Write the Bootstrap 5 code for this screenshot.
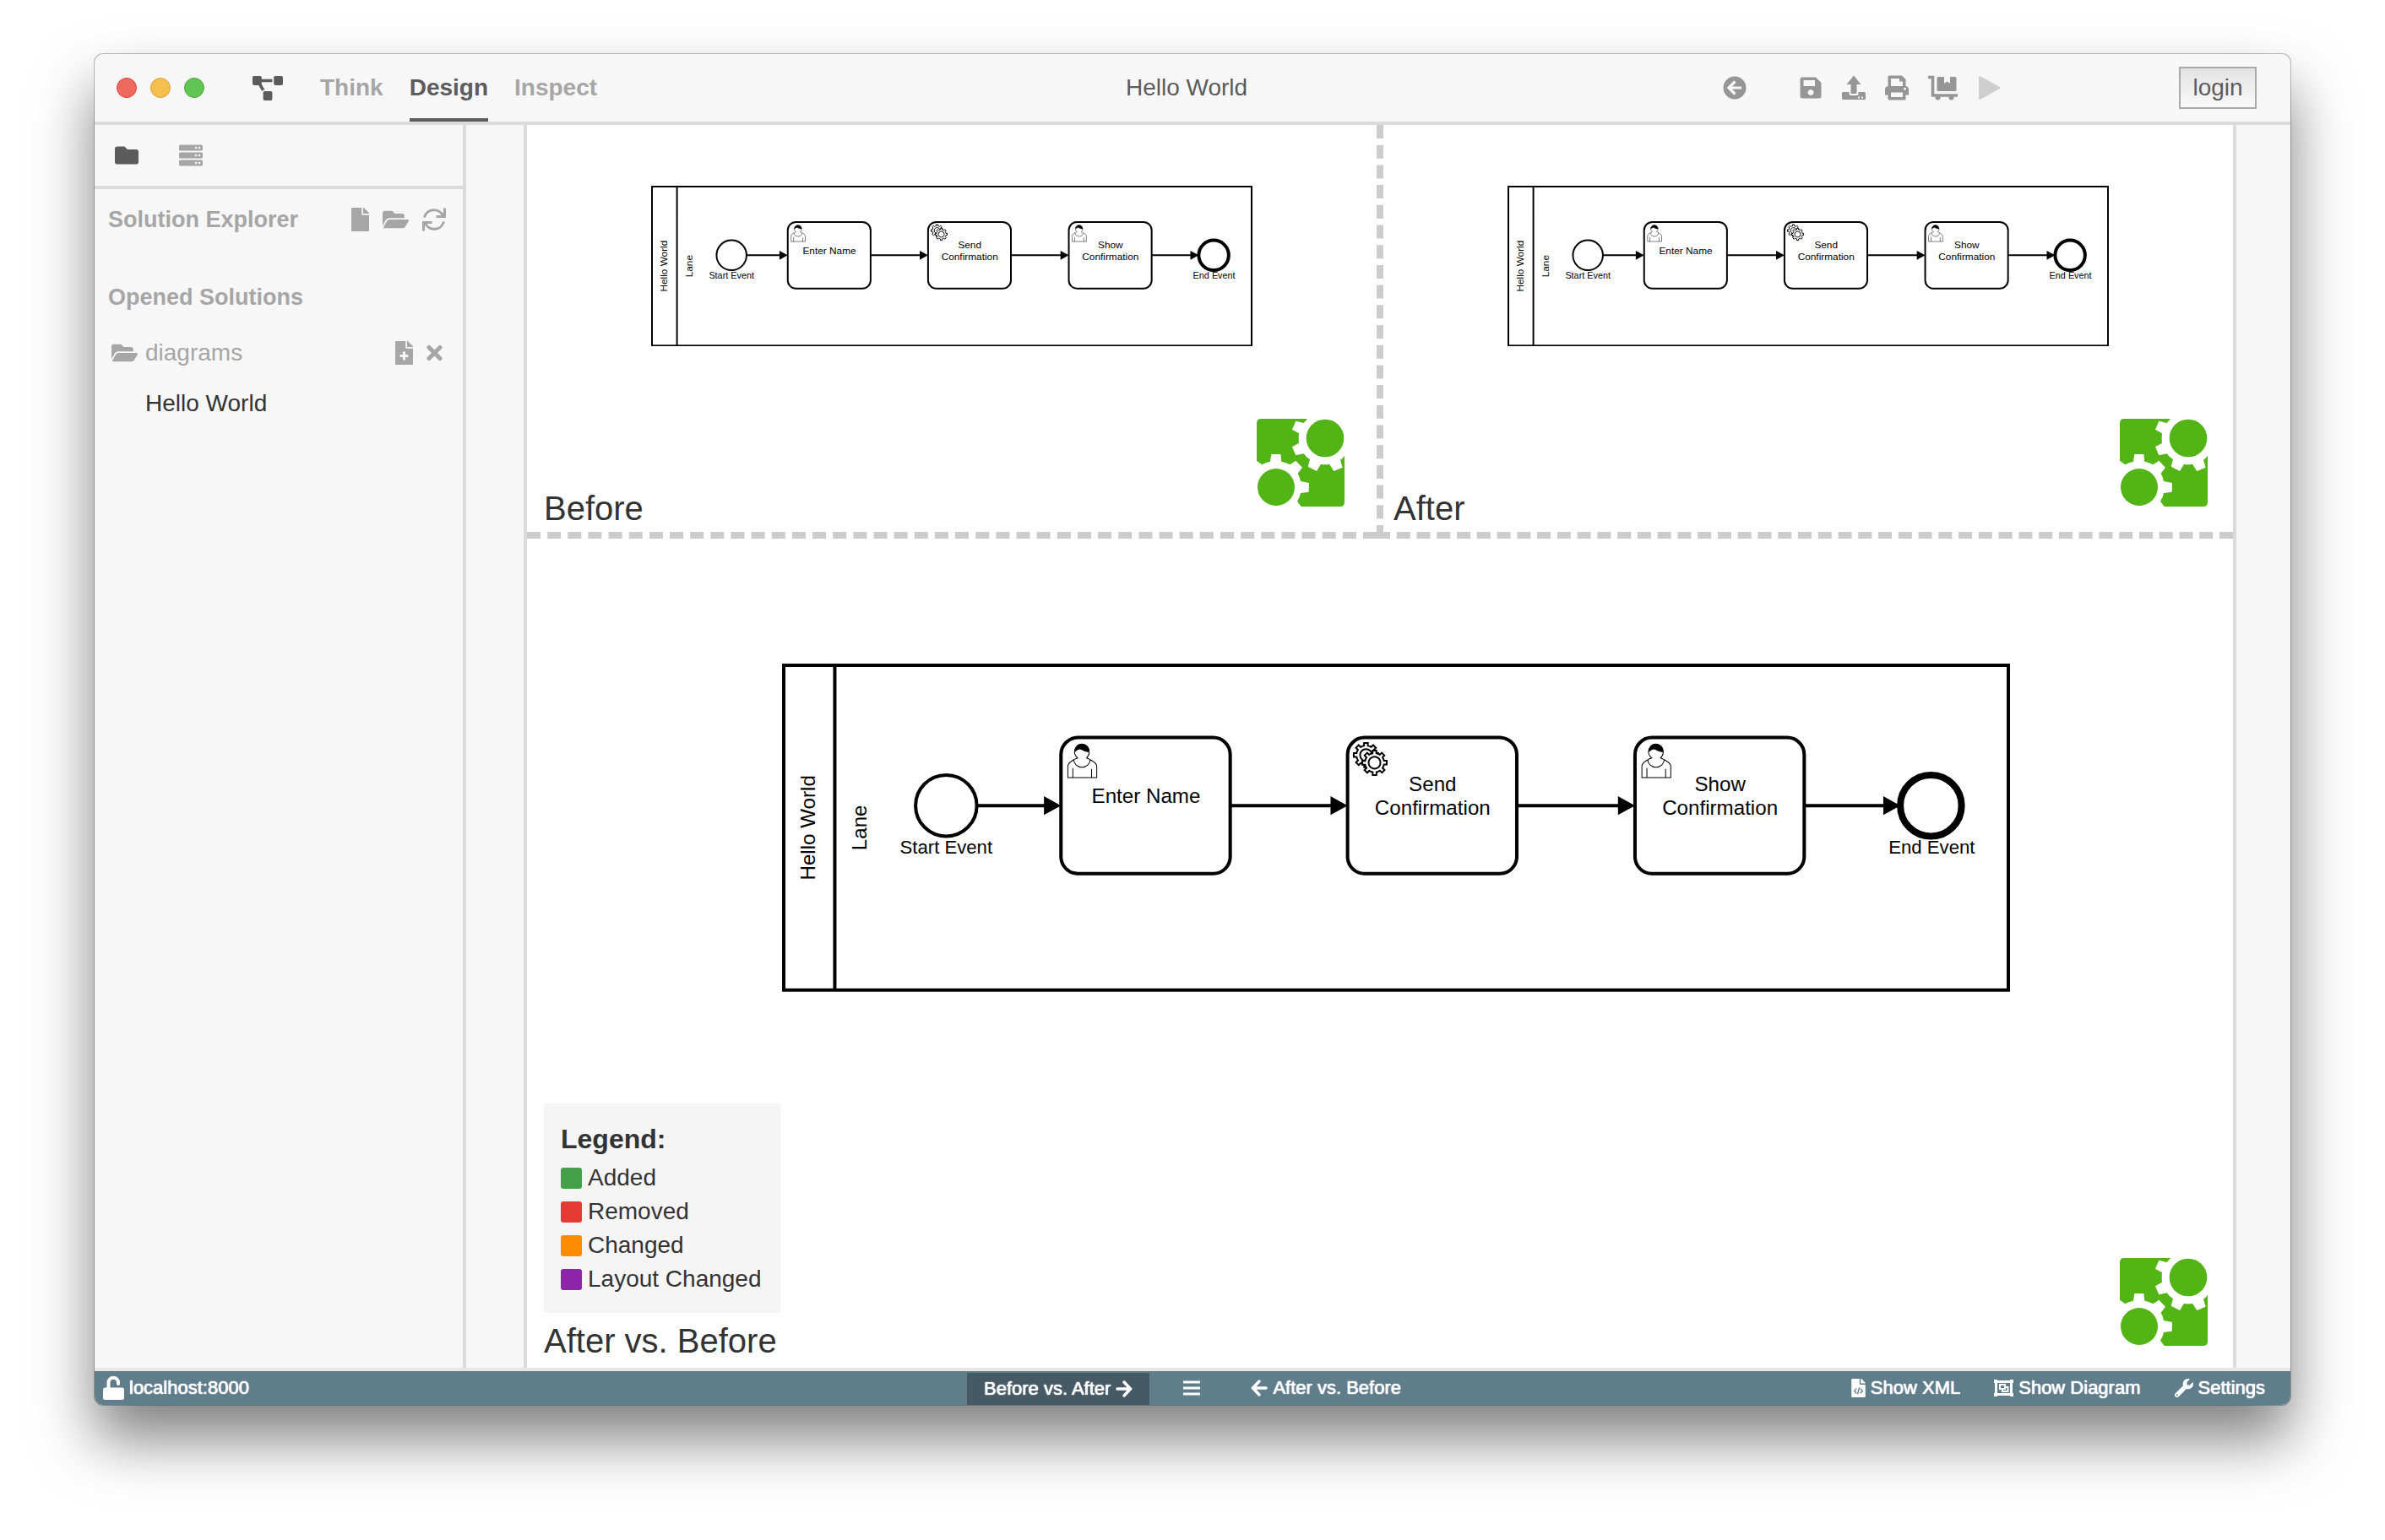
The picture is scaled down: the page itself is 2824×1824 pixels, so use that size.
<!DOCTYPE html>
<html lang="en">
<head>
<meta charset="utf-8">
<meta name="viewport" content="width=device-width, initial-scale=1">
<title>Hello World</title>
<link href="https://cdn.jsdelivr.net/npm/bootstrap@5.3.0/dist/css/bootstrap.min.css" rel="stylesheet">
<style>
  body { font-family: "Liberation Sans", Arial, sans-serif; font-size: 28px; line-height: 40px; color: #333; background: #fff; min-height: 100vh; padding: 64px 112px 160px; }
  svg { display: block; flex: none; }
  button { color: inherit; background: none; border: 0; padding: 0; text-shadow: inherit; }
  a { color: inherit; text-decoration: none; }
  .app-window { background: #f7f7f7; border-radius: 10px; overflow: hidden; box-shadow: 0 0 0 1px rgba(0,0,0,.25), 0 40px 70px rgba(0,0,0,.5); }

  .titlebar { height: 84px; border-bottom: 4px solid #dbdbdb; padding: 0 40px 0 26px; color: #5c5c5c; }
  .light { width: 24px; height: 24px; border-radius: 50%; border: 1px solid #e0443e; background: #ee6a5f; }
  .light.min { background: #f5bf4f; border-color: #d6a243; }
  .light.max { background: #61c554; border-color: #50a73f; }
  .mode-tabs { gap: 31px; margin-left: 44px; }
  .mode-tabs a { display: flex; align-items: center; color: #a6a6a6; font-weight: 700; border: solid transparent; border-width: 4px 0; }
  .mode-tabs a.active { color: #5c5c5c; border-bottom-color: #5c5c5c; }
  .logo-icon { margin-left: 57px; }
  .tools { gap: 23px; margin-right: 210px; color: #969696; }
  .tools .back { margin-right: 39px; }
  .tools .run { color: #cfcfcf; }
  .login-btn { width: 92px; height: 50px; border: 2px solid #aaa; background: linear-gradient(#e3e3e3, #fafafa); }

  .explorer { width: 440px; border-right: 4px solid #dbdbdb; color: #a6a6a6; }
  .explorer-tabs { height: 76px; border-bottom: 4px solid #dbdbdb; padding: 0 24px; gap: 48px; }
  .explorer-tabs .active { color: #5c5c5c; }
  .tree-row { height: 60px; padding: 0 20px 0 16px; gap: 16px; }
  .tree-row h2 { font-size: 27px; font-weight: 700; margin: 0; line-height: 40px; }
  .tree-head { height: 72px; margin-bottom: 26px; }
  .solution { margin-top: 6px; padding: 0 24px 0 20px; }
  .solution .folder-name { gap: 9px; }
  .diagram-item { padding-left: 60px; color: #333; }
  .gutter-left { width: 72px; border-right: 4px solid #dbdbdb; }
  .gutter-right { width: 68px; border-left: 4px solid #dbdbdb; }

  .canvas { background: #fff; }
  .compare-row { height: 490px; }
  .pane { border-bottom: 8px dashed #ccc; }
  .pane + .pane { border-left: 8px dashed #ccc; }
  .diagram { display: block; height: auto; max-width: 100%; margin: 0 auto; }
  .diagram text { font-family: "Liberation Sans", Arial, sans-serif; font-size: 12px; text-anchor: middle; fill: #000; }
  .diagram .event-label { font-size: 11px; }
  .diagram-sm { width: 712px; margin-top: 72px; }
  .diagram-lg { width: 1454px; }
  .diff-stage { padding: 148px 0 0 37px; }
  .pane-foot { padding: 0 30px 0 20px; }
  .pane-foot .engine-logo { margin-bottom: 30px; }
  .pane-before .pane-foot { padding-right: 38px; }
  .pane-after .pane-foot { padding-left: 12px; }
  .diff .engine-logo { margin-bottom: 26px; }
  .diff .pane-title { margin-bottom: 4px; }
  .pane-title { font-size: 40px; line-height: 56px; font-weight: 400; margin: 0; }
  .legend { min-width: 280px; background: #f5f5f5; padding: 20px; margin-bottom: 5px; }
  .legend h3 { font-size: 32px; line-height: 44px; font-weight: 700; margin: 0 0 4px; }
  .legend li { gap: 7px; }
  .swatch { width: 25px; height: 25px; border-radius: 3px; }
  .added { background: #43a047; } .removed { background: #e53935; } .changed { background: #fb8c00; } .moved { background: #8e24aa; }

  .statusbar { height: 44px; border-top: 4px solid #e6e8e8; background: #607d8b; color: #fff; font-size: 22px; line-height: 36px; padding: 0 10px; text-shadow: 0 0 1px #fff, 0 0 1px #fff; }
  .statusbar button, .statusbar a { display: flex; align-items: center; gap: 6px; padding: 0 20px; align-self: stretch; white-space: nowrap; }
  .statusbar .host { padding: 0; }
  .statusbar .current { background: #455a64; margin-top: 2px; }
  .statusbar .menu { padding: 0 40px; }
</style>
<script src="https://cdn.jsdelivr.net/npm/bootstrap@5.3.0/dist/js/bootstrap.bundle.min.js"></script>
</head>
<body class="d-flex flex-column">

<svg width="0" height="0" class="position-absolute" aria-hidden="true">
  <defs>
    <g id="user-mark" stroke="#000" stroke-width=".5" fill="#fff">
      <path d="m15,12 c0.909,-0.845 1.594,-2.049 1.594,-3.385 0,-2.554 -1.805,-4.622 -4.357,-4.622 -2.552,0 -4.288,2.068 -4.288,4.622 0,1.348 0.974,2.562 1.896,3.405 -0.529,0.187 -5.669,2.097 -5.794,4.756 v6.718 h17 v-6.718 c0,-2.298 -5.528,-4.595 -6.051,-4.776z m-8,6 l0,5.5 m11,0 l0,-5"/>
      <path d="m15,12 m2.162,1.009 c0,2.447 -2.158,4.431 -4.821,4.431 -2.665,0 -4.822,-1.981 -4.822,-4.431"/>
      <path fill="#000" d="m15,12 m-6.9,-3.8 c0,0 2.251,-2.358 4.274,-1.177 2.024,1.181 4.221,1.537 4.124,0.965 -0.098,-0.57 -0.117,-3.791 -4.191,-4.136 -3.572,0.001 -4.208,3.67 -4.208,4.348 z"/>
    </g>
    <g id="gear-mark">
      <circle cx="-1.140" cy="-7.230" r="4" fill="#fff"/>
      <path stroke="#000" fill="#fff" d="m0,0 v-1.713 c0.352,-0.07 0.704,-0.178 1.048,-0.321 0.344,-0.145 0.666,-0.321 0.966,-0.521 l1.194,1.18 1.567,-1.577 -1.195,-1.18 c0.403,-0.614 0.683,-1.299 0.825,-2.018 l1.622,-0.01 v-2.22 l-1.637,0.01 c-0.073,-0.352 -0.178,-0.7 -0.324,-1.044 -0.145,-0.344 -0.321,-0.664 -0.523,-0.962 l1.131,-1.136 -1.583,-1.563 -1.13,1.136 c-0.614,-0.401 -1.303,-0.681 -2.023,-0.822 l0.009,-1.619 h-2.241 l0.004,1.631 c-0.354,0.074 -0.705,0.18 -1.05,0.324 -0.344,0.144 -0.665,0.321 -0.964,0.52 l-1.17,-1.158 -1.567,1.579 1.168,1.157 c-0.403,0.613 -0.683,1.298 -0.825,2.017 l-1.659,0.003 v2.222 l1.672,-0.006 c0.073,0.351 0.18,0.702 0.324,1.045 0.145,0.344 0.321,0.664 0.523,0.961 l-1.199,1.197 1.584,1.56 1.196,-1.193 c0.614,0.403 1.303,0.682 2.023,0.823 l0.001,1.699 h2.227 z m0.221,-3.996 c-1.789,0.75 -3.858,-0.093 -4.61,-1.874 -0.752,-1.783 0.091,-3.846 1.88,-4.596 1.788,-0.749 3.857,0.093 4.609,1.874 0.752,1.782 -0.091,3.846 -1.88,4.596 z"/>
    </g>
    <g id="flow-shapes">
      <g fill="#fff" stroke="#000" stroke-width="2">
        <rect x="0" y="0" width="720" height="191"/>
        <path d="M30 0V191"/>
        <circle cx="95.5" cy="82.5" r="18"/>
        <rect x="163" y="42.5" width="99.5" height="80" rx="10"/>
        <rect x="331.5" y="42.5" width="99.5" height="80" rx="10"/>
        <rect x="500.5" y="42.5" width="99.5" height="80" rx="10"/>
        <path d="M113.500 82.500H155M263 82.500H324M431.500 82.500H492M600.500 82.500H648"/>
        <circle cx="674.500" cy="82.500" r="18" stroke-width="4"/>
      </g>
      <path d="M153 77v11l10-5.500zM321.500 77v11l10-5.500zM490.500 77v11l10-5.500zM646.500 77v11l10-5.500z"/>
      <use href="#user-mark" x="163" y="42.5"/>
      <use href="#user-mark" x="500.5" y="42.5"/>
      <use href="#gear-mark" x="343.5" y="60"/>
      <use href="#gear-mark" x="348.500" y="64.500"/>
    </g>
    <symbol id="engine-logo" viewBox="0 0 312 312">
      <path d="M0 16Q0 0 16 0H180L167 15 139 8 126 38 150 52Q148 69 150 86L126 100 139 130 167 124Q176 137 189 145L182 170 213 186 228 161Q243 164 258 161L274 186 305 173 297 146Q306 140 312 131V296Q312 312 296 312H158L144 293Q153 280 156 264L185 260 186 228 156 222Q153 206 146 194L162 173 139 149 118 163Q104 155 88 152L85 126H52L48 152Q34 154 19 163L0 149z"/>
      <circle cx="243" cy="69" r="67"/><circle cx="69" cy="243" r="66"/>
    </symbol>
    <symbol id="i-folder-open" viewBox="0 0 576 512"><path d="M572.694 292.093L500.27 416.248A63.997 63.997 0 0 1 444.989 448H45.025c-18.523 0-30.064-20.093-20.731-36.093l72.424-124.155A64 64 0 0 1 152 256h399.964c18.523 0 30.064 20.093 20.730 36.093zM152 224h328v-48c0-26.510-21.490-48-48-48H272l-64-64H48C21.490 64 0 85.490 0 112v278.046l69.077-118.418C86.214 242.250 117.989 224 152 224z"/></symbol>
    <path id="i-file" d="M224 136V0H24C10.700 0 0 10.700 0 24v464c0 13.300 10.700 24 24 24h336c13.300 0 24-10.700 24-24V160H248c-13.200 0-24-10.800-24-24zm160-14.100v6.100H256V0h6.100c6.400 0 12.500 2.500 17 7l97.900 98c4.500 4.500 7 10.600 7 16.900z"/>
  </defs>
</svg>

<main class="app-window d-flex flex-column flex-grow-1">
  <header class="titlebar d-flex align-items-stretch">
    <div class="d-flex align-items-center col">
      <div class="d-flex gap-3" aria-hidden="true"><span class="light"></span><span class="light min"></span><span class="light max"></span></div>
      <svg class="logo-icon" width="36" height="29" viewBox="0 0 640 512" fill="currentColor"><path d="M384 320H256c-17.670 0-32 14.330-32 32v128c0 17.670 14.330 32 32 32h128c17.670 0 32-14.330 32-32V352c0-17.670-14.330-32-32-32zM192 32c0-17.670-14.330-32-32-32H32C14.330 0 0 14.330 0 32v128c0 17.670 14.330 32 32 32h95.720l73.160 128.040C211.980 300.980 232.400 288 256 288h.280L192 175.510V128h224V64H192V32zM608 0H480c-17.670 0-32 14.330-32 32v128c0 17.670 14.330 32 32 32h128c17.670 0 32-14.330 32-32V32c0-17.670-14.330-32-32-32z"/></svg>
      <nav class="mode-tabs d-flex align-self-stretch">
        <a href="#think">Think</a><a href="#design" class="active" aria-current="page">Design</a><a href="#inspect">Inspect</a>
      </nav>
    </div>
    <div class="align-self-center">Hello World</div>
    <div class="d-flex align-items-center justify-content-end col">
      <div class="tools d-flex align-items-center">
        <button class="back" aria-label="Back"><svg width="28" height="28" viewBox="0 0 28 28"><circle cx="14" cy="14" r="13.500" fill="currentColor"/><path d="M14.500 6.500L7 14l7.500 7.500M7.500 14H22" fill="none" stroke="#f7f7f7" stroke-width="3.200"/></svg></button>
        <button aria-label="Save"><svg width="28" height="28" viewBox="0 0 28 28" fill="currentColor" fill-rule="evenodd"><path d="M4 1.500H20L26.500 8V24a2.500 2.500 0 0 1-2.500 2.500H4A2.500 2.500 0 0 1 1.500 24V4A2.500 2.500 0 0 1 4 1.500zM5.500 5v7H19V5zM14 16a3.500 3.500 0 1 0 .1 0z"/></svg></button>
        <button aria-label="Upload"><svg width="28" height="30" viewBox="0 0 28 30" fill="currentColor" fill-rule="evenodd"><path d="M14 .5L22.500 11H17.500V20.500a1.500 1.500 0 0 1-1.500 1.500H12a1.500 1.500 0 0 1-1.500-1.500V11H5.500z"/><path d="M1.500 20H8.500V21.500a2.500 2.500 0 0 0 2.500 2.500H17a2.500 2.500 0 0 0 2.500-2.500V20H26.500A1.500 1.500 0 0 1 28 21.500V27.500A1.500 1.500 0 0 1 26.500 29H1.500A1.500 1.500 0 0 1 0 27.500V21.500A1.500 1.500 0 0 1 1.500 20zM19 25.500v2h2v-2zM23 25.500v2h2v-2z"/></svg></button>
        <button aria-label="Print"><svg width="28" height="30" viewBox="0 0 28 30" fill="currentColor" fill-rule="evenodd"><path d="M5 .5H20L24.500 5V13Q28 13.500 28 17V23.500H24.500V28A1.500 1.500 0 0 1 23 29.500H5A1.500 1.500 0 0 1 3.500 28V23.500H0V17Q0 13.500 3.500 13V2A1.500 1.500 0 0 1 5 .5zM7 4V13H21V7.500H17V4zM7 20.500V26H21V20.500zM23.500 14.700a1.500 1.500 0 1 0 .1 0z"/></svg></button>
        <button aria-label="Deploy"><svg width="36" height="30" viewBox="0 0 36 30"><path d="M0 2.500H5.500V24H35" fill="none" stroke="currentColor" stroke-width="3.600"/><path d="M12 2H19V10L22.500 7.500 26 10V2H32A1.500 1.500 0 0 1 33.500 3.500V17.500A1.500 1.500 0 0 1 32 19H12A1.500 1.500 0 0 1 10.500 17.500V3.500A1.500 1.500 0 0 1 12 2z" fill="currentColor"/><circle cx="11.500" cy="26.500" r="3" fill="currentColor"/><circle cx="27.500" cy="26.500" r="3" fill="currentColor"/></svg></button>
        <button class="run" aria-label="Run"><svg width="28" height="28" viewBox="0 0 28 28"><path d="M1 2Q1-.500 3.500 .500L25 12.500Q27 14 25 15.500L3.500 27.500Q1 28.500 1 26z" fill="currentColor"/></svg></button>
      </div>
      <button class="login-btn">login</button>
    </div>
  </header>

  <div class="d-flex flex-grow-1">
    <aside class="explorer flex-shrink-0">
      <div class="explorer-tabs d-flex align-items-center">
        <button class="active" aria-label="Files"><svg width="28" height="28" viewBox="0 0 512 512" fill="currentColor"><path d="M464 128H272l-64-64H48C21.490 64 0 85.490 0 112v288c0 26.510 21.490 48 48 48h416c26.510 0 48-21.490 48-48V176c0-26.510-21.490-48-48-48z"/></svg></button>
        <button aria-label="Servers"><svg width="28" height="26" viewBox="0 0 28 26" fill="currentColor"><rect y="0.500" width="28" height="7" rx="1.500"/><rect y="9.500" width="28" height="7" rx="1.500"/><rect y="18.500" width="28" height="7" rx="1.500"/><g fill="#f7f7f7"><circle cx="20" cy="4" r="1.300"/><circle cx="24" cy="4" r="1.300"/><circle cx="20" cy="13" r="1.300"/><circle cx="24" cy="13" r="1.300"/><circle cx="20" cy="22" r="1.300"/><circle cx="24" cy="22" r="1.300"/></g></svg></button>
      </div>
      <div class="tree-row tree-head d-flex align-items-center">
        <h2 class="me-auto">Solution Explorer</h2>
        <button aria-label="New diagram"><svg width="21" height="28" viewBox="0 0 384 512" fill="currentColor"><use href="#i-file"/></svg></button>
        <button aria-label="Open solution"><svg width="31" height="28" fill="currentColor"><use href="#i-folder-open"/></svg></button>
        <button aria-label="Refresh"><svg width="28" height="28" viewBox="0 0 28 28" fill="none" stroke="currentColor" stroke-width="3"><path d="M2.500 11.500A11.700 11.700 0 0 1 24.500 9.500M16.500 10.500H26.500V.5"/><path d="M25.500 16.500A11.700 11.700 0 0 1 3.500 18.500M11.500 17.500H1.500V27.500"/></svg></button>
      </div>
      <div class="tree-row d-flex align-items-center"><h2>Opened Solutions</h2></div>
      <div class="tree-row solution d-flex align-items-center">
        <div class="folder-name d-flex align-items-center me-auto"><svg width="31" height="28" fill="currentColor"><use href="#i-folder-open"/></svg>diagrams</div>
        <button aria-label="Add diagram"><svg width="21" height="28" viewBox="0 0 384 512" fill="currentColor"><use href="#i-file"/><path d="M192 230V410M102 320H282" stroke="#f7f7f7" stroke-width="56"/></svg></button>
        <button aria-label="Close solution"><svg width="19" height="20" viewBox="0 0 19 20"><path d="M3 3.500L16 16.500M16 3.500L3 16.500" stroke="currentColor" stroke-width="5" stroke-linecap="round"/></svg></button>
      </div>
      <a href="#hello-world" class="tree-row diagram-item d-flex align-items-center">Hello World</a>
    </aside>
    <div class="gutter-left flex-shrink-0"></div>

    <section class="canvas flex-grow-1 d-flex flex-column">
      <div class="compare-row d-flex">
        <div class="pane pane-before col d-flex flex-column">
          <svg class="diagram diagram-sm" viewBox="-1 -1 722 193" role="img" aria-label="Before">
            <use href="#flow-shapes"/>
            <text transform="translate(18.500 95.500) rotate(-90)">Hello World</text><text transform="translate(48.500 95.500) rotate(-90)">Lane</text>
            <text class="event-label" x="95.500" y="110.500">Start Event</text><text x="213" y="81">Enter Name</text>
            <text x="381.500" y="74">Send</text><text x="381.500" y="88">Confirmation</text>
            <text x="550.500" y="74">Show</text><text x="550.500" y="88">Confirmation</text><text class="event-label" x="675" y="110.500">End Event</text>
          </svg>
          <div class="pane-foot d-flex justify-content-between align-items-end mt-auto">
            <h2 class="pane-title">Before</h2>
            <svg class="engine-logo" width="104" height="104" fill="#52b415"><use href="#engine-logo"/></svg>
          </div>
        </div>
        <div class="pane pane-after col d-flex flex-column">
          <svg class="diagram diagram-sm" viewBox="-1 -1 722 193" role="img" aria-label="After">
            <use href="#flow-shapes"/>
            <text transform="translate(18.500 95.500) rotate(-90)">Hello World</text><text transform="translate(48.500 95.500) rotate(-90)">Lane</text>
            <text class="event-label" x="95.500" y="110.500">Start Event</text><text x="213" y="81">Enter Name</text>
            <text x="381.500" y="74">Send</text><text x="381.500" y="88">Confirmation</text>
            <text x="550.500" y="74">Show</text><text x="550.500" y="88">Confirmation</text><text class="event-label" x="675" y="110.500">End Event</text>
          </svg>
          <div class="pane-foot d-flex justify-content-between align-items-end mt-auto">
            <h2 class="pane-title">After</h2>
            <svg class="engine-logo" width="104" height="104" fill="#52b415"><use href="#engine-logo"/></svg>
          </div>
        </div>
      </div>
      <div class="diff d-flex flex-column flex-grow-1">
        <div class="diff-stage">
          <svg class="diagram diagram-lg" viewBox="-1 -1 722 193" role="img" aria-label="After vs. Before">
            <use href="#flow-shapes"/>
            <text transform="translate(18.500 95.500) rotate(-90)">Hello World</text><text transform="translate(48.500 95.500) rotate(-90)">Lane</text>
            <text class="event-label" x="95.500" y="110.500">Start Event</text><text x="213" y="81">Enter Name</text>
            <text x="381.500" y="74">Send</text><text x="381.500" y="88">Confirmation</text>
            <text x="550.500" y="74">Show</text><text x="550.500" y="88">Confirmation</text><text class="event-label" x="675" y="110.500">End Event</text>
          </svg>
        </div>
        <div class="pane-foot d-flex justify-content-between align-items-end mt-auto">
          <div>
            <div class="legend">
              <h3>Legend:</h3>
              <ul class="list-unstyled m-0">
                <li class="d-flex align-items-center"><span class="swatch added"></span>Added</li>
                <li class="d-flex align-items-center"><span class="swatch removed"></span>Removed</li>
                <li class="d-flex align-items-center"><span class="swatch changed"></span>Changed</li>
                <li class="d-flex align-items-center"><span class="swatch moved"></span>Layout Changed</li>
              </ul>
            </div>
            <h2 class="pane-title">After vs. Before</h2>
          </div>
          <svg class="engine-logo" width="104" height="104" fill="#52b415"><use href="#engine-logo"/></svg>
        </div>
      </div>
    </section>
    <div class="gutter-right flex-shrink-0"></div>
  </div>

  <footer class="statusbar d-flex align-items-stretch">
    <div class="col d-flex">
      <a href="#host" class="host"><svg width="25" height="30" viewBox="0 0 25 30"><path d="M6.500 17V8.500a5.700 5.700 0 0 1 11.500 0V10" fill="none" stroke="#fff" stroke-width="4" stroke-linecap="round"/><rect y="14.500" width="25" height="14.500" rx="2.500" fill="#fff"/></svg>localhost:8000</a>
    </div>
    <div class="d-flex">
      <button class="current">Before vs. After <svg width="20" height="22" viewBox="0 0 20 22" fill="none" stroke="#fff" stroke-width="3.500" stroke-linecap="round"><path d="M2 11H17M10 3l7.500 8L10 19"/></svg></button>
      <button class="menu" aria-label="Menu"><svg width="20" height="18" viewBox="0 0 20 18" stroke="#fff" stroke-width="3"><path d="M0 2H20M0 9H20M0 16H20"/></svg></button>
      <button><svg width="20" height="22" viewBox="0 0 20 22" fill="none" stroke="#fff" stroke-width="3.500" stroke-linecap="round"><path d="M18 11H3M10 3L2.500 11L10 19"/></svg> After vs. Before</button>
    </div>
    <div class="col d-flex justify-content-end">
      <button><svg width="17" height="22" viewBox="0 0 384 512" fill="#fff"><use href="#i-file"/><path d="M140 270L80 335 140 400M244 270L304 335 244 400M215 245L170 425" fill="none" stroke="#607d8b" stroke-width="32"/></svg>Show XML</button>
      <button><svg width="23" height="20" viewBox="0 0 23 20"><path d="M2.500 2.500H20.500V17.500H2.500z" fill="none" stroke="#fff" stroke-width="3"/><path d="M0 0h4v4H0zM19 0h4v4h-4zM0 16h4v4H0zM19 16h4v4h-4z" fill="#fff"/><path d="M6 5H14V8H17.500V15H9V12H6zM8 7V10H12V7zM14 10V12H11V13H15.500V10z" fill="#fff" fill-rule="evenodd"/></svg>Show Diagram</button>
      <button><svg width="22" height="22" viewBox="0 0 512 512" fill="#fff"><path d="M507.730 109.100c-2.240-9.030-13.540-12.090-20.120-5.510l-74.360 74.360-67.880-11.310-11.310-67.880 74.360-74.360c6.620-6.620 3.430-17.900-5.660-20.160-47.380-11.740-99.550.910-136.580 37.930-39.640 39.640-50.550 97.100-34.050 147.200L18.740 402.760c-24.990 24.990-24.990 65.510 0 90.500 24.990 24.990 65.510 24.990 90.500 0l213.210-213.210c50.120 16.710 107.470 5.680 147.370-34.220 37.070-37.070 49.700-89.320 37.910-136.730zM64 472c-13.250 0-24-10.750-24-24 0-13.260 10.750-24 24-24s24 10.740 24 24c0 13.250-10.750 24-24 24z"/></svg>Settings</button>
    </div>
  </footer>
</main>
</body>
</html>
